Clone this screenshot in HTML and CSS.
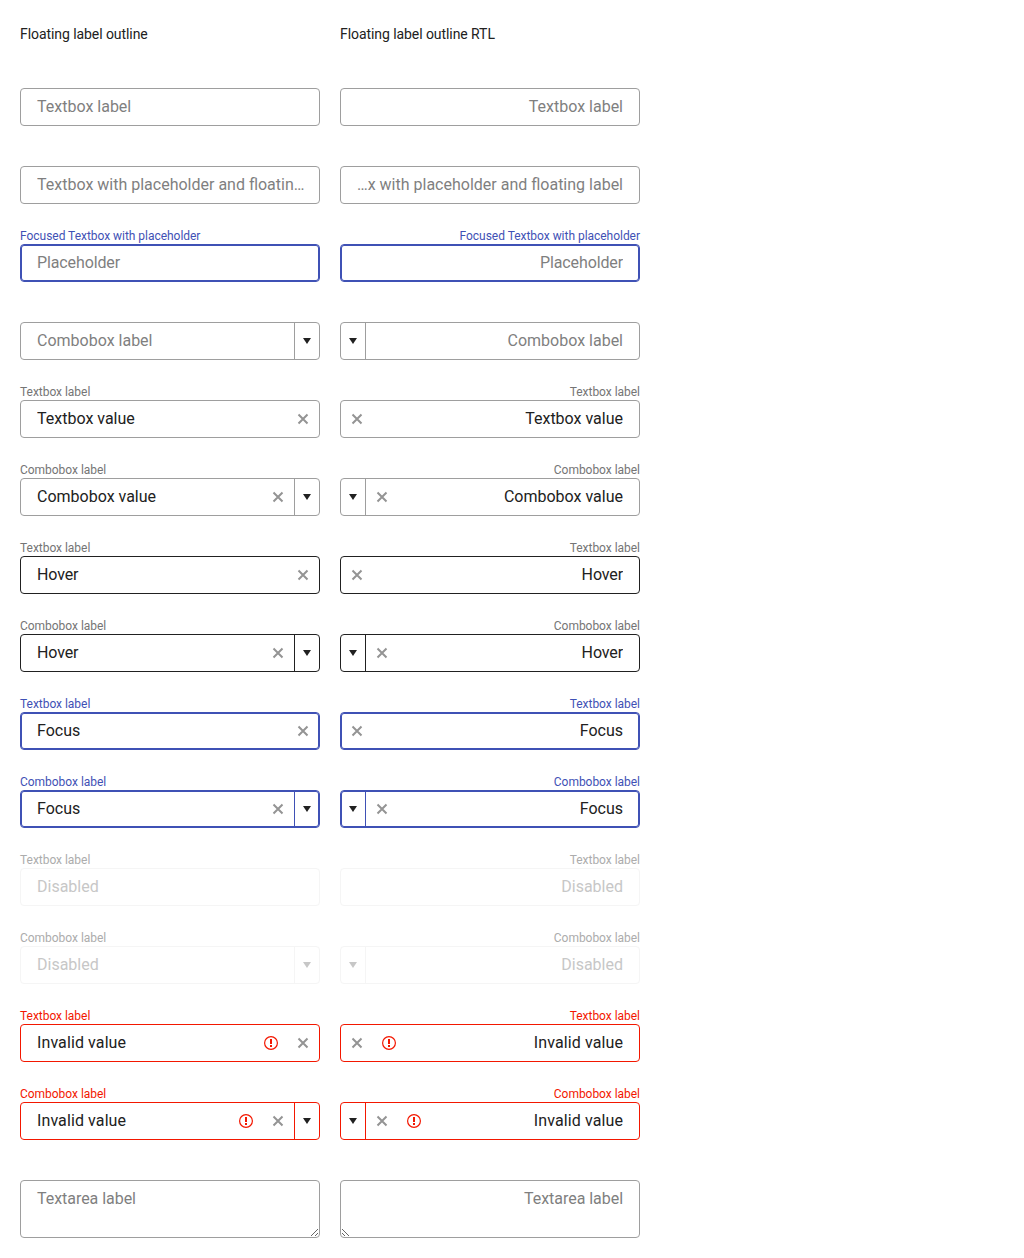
FILE: index.html
```html
<!DOCTYPE html>
<html lang="en">
<head>
<meta charset="utf-8">
<title>Floating label outline</title>
<link rel="stylesheet" href="styles.css">
</head>
<body>
<main class="columns" id="columns"></main>
<script src="script.js"></script>
</body>
</html>
```
FILE: styles.css
```css
* { box-sizing: border-box; }
body {
  margin: 0;
  background: #fff;
  color: #212121;
  font-family: Roboto, sans-serif;
  font-size: 16px;
}
.columns {
  display: flex;
  gap: 20px;
  padding: 24px 20px 20px;
}
.column { width: 300px; }
.title {
  margin: 0 0 28px;
  font-size: 14px;
  font-weight: 400;
  line-height: 20px;
  letter-spacing: -0.07px;
}
.fields {
  display: flex;
  flex-direction: column;
  gap: 24px;
}
.rtl .fields { direction: rtl; }
.label {
  height: 16px;
  color: #757575;
  font-size: 12px;
  line-height: 16px;
  letter-spacing: -0.03px;
}
.control {
  display: flex;
  align-items: center;
  height: 38px;
  border: 1px solid #9e9e9e;
  border-radius: 4px;
}
.value {
  flex: 1;
  min-width: 0;
  margin: 0 16px;
  overflow: hidden;
  line-height: 24px;
  text-overflow: ellipsis;
  white-space: nowrap;
}
.muted { color: #7f7f7f; }
.long { margin-inline-end: 14px; }
.tight { letter-spacing: -0.12px; }
.loose { letter-spacing: 0.1px; }
.clear {
  flex: none;
  width: 16px;
  height: 16px;
  margin-inline-end: 8px;
  color: #949494;
}
.warning {
  flex: none;
  width: 14px;
  height: 14px;
  margin-inline-end: 17px;
  color: #f31700;
}
.toggle {
  display: flex;
  flex: none;
  align-items: center;
  justify-content: center;
  align-self: stretch;
  width: 25px;
  border-inline-start: 1px solid #9e9e9e;
}
.arrow { width: 8px; height: 6px; }
.hover .control, .hover .toggle { border-color: #212121; }
.focus .label { color: #3f51b5; }
.focus .control {
  border-color: #3f51b5;
  box-shadow: inset 0 0 0 1px #3f51b5;
}
.focus .toggle { border-color: #3f51b5; }
.disabled .label { color: #acacac; }
.disabled .control, .disabled .toggle { border-color: #f5f5f5; }
.disabled .value, .disabled .arrow { color: #c7c7c7; }
.invalid .label { color: #f31700; }
.invalid .control, .invalid .toggle { border-color: #f31700; }
.control.multiline { height: 58px; }
.textarea {
  display: block;
  width: 100%;
  height: 56px;
  padding: 6px 16px;
  border: 0;
  outline: 0;
  background: transparent;
  font: 16px/24px Roboto, sans-serif;
  letter-spacing: -0.04px;
  resize: both;
}
.textarea::placeholder { color: #7f7f7f; opacity: 1; }
```
FILE: script.js
```js
const clearIcon = '<svg class="clear" viewBox="0 0 16 16"><path d="M3.5 3.5l9 9M12.5 3.5l-9 9" stroke="currentColor" stroke-width="2"/></svg>';
const warningIcon = '<svg class="warning" viewBox="0 0 14 14"><circle cx="7" cy="7" r="6.4" fill="none" stroke="currentColor" stroke-width="1.2"/><path d="M6 3h2v5H6zM6 9h2v2H6z" fill="currentColor"/></svg>';
const arrowIcon = '<span class="toggle"><svg class="arrow" viewBox="0 0 8 6"><path d="M0 0h8L4 6z" fill="currentColor"/></svg></span>';

const tb = 'Textbox label';
const cb = 'Combobox label';
const fields = [
  { text: tb, muted: true },
  { text: 'Textbox with placeholder and floating label', muted: true, fit: 'long' },
  { label: 'Focused Textbox with placeholder', text: 'Placeholder', muted: true, state: 'focus', fit: 'tight' },
  { text: cb, muted: true, combo: true },
  { label: tb, text: 'Textbox value', clear: true },
  { label: cb, text: 'Combobox value', clear: true, combo: true },
  { label: tb, text: 'Hover', clear: true, state: 'hover', fit: 'tight' },
  { label: cb, text: 'Hover', clear: true, combo: true, state: 'hover', fit: 'tight' },
  { label: tb, text: 'Focus', clear: true, state: 'focus' },
  { label: cb, text: 'Focus', clear: true, combo: true, state: 'focus' },
  { label: tb, text: 'Disabled', state: 'disabled' },
  { label: cb, text: 'Disabled', combo: true, state: 'disabled' },
  { label: tb, text: 'Invalid value', clear: true, state: 'invalid', fit: 'loose' },
  { label: cb, text: 'Invalid value', clear: true, combo: true, state: 'invalid', fit: 'loose' },
  { text: 'Textarea label', multiline: true }
];

function renderField(f) {
  const control = f.multiline
    ? `<div class="control multiline"><textarea class="textarea" placeholder="${f.text}"></textarea></div>`
    : `<div class="control"><span class="value ${f.muted ? 'muted' : ''} ${f.fit || ''}">${f.text}</span>${f.state === 'invalid' ? warningIcon : ''}${f.clear ? clearIcon : ''}${f.combo ? arrowIcon : ''}</div>`;
  return `<div class="field ${f.state || ''}"><div class="label">${f.label || ''}</div>${control}</div>`;
}

function renderColumn(title, dir) {
  return `<section class="column ${dir}"><h2 class="title">${title}</h2><div class="fields">${fields.map(renderField).join('')}</div></section>`;
}

document.getElementById('columns').innerHTML =
  renderColumn('Floating label outline', 'ltr') + renderColumn('Floating label outline RTL', 'rtl');
```
